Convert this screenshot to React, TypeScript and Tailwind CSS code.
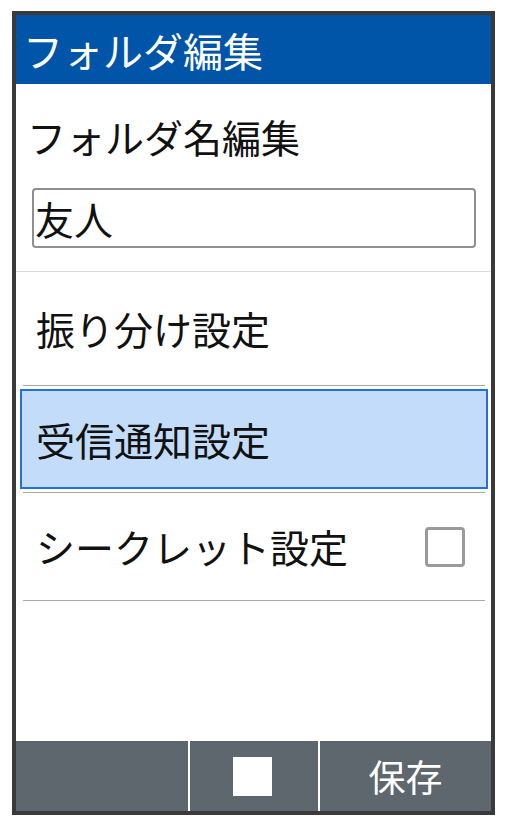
const font = { fontFamily: '"Noto Sans CJK JP", "Noto Sans", sans-serif' };

const Divider = ({ className }: { className: string }) => (
  <div className={className} />
);

export default function App() {
  return (
    <div className="w-full h-[826px] bg-white" style={font}>
      <div className="ml-[12px] mt-[11px] w-[483px] h-[804px] border-4 border-[#3a3a3a] flex flex-col">
        <header className="h-[69px] shrink-0 bg-[#0055a8] text-white text-[40px] leading-none flex items-center pl-[7px]">
          フォルダ編集
        </header>

        <div className="h-[104px] shrink-0 flex items-center pl-[11px] text-[39px] leading-none text-[#111]">
          フォルダ名編集
        </div>
        <div className="mx-[16px] mr-[15px] h-[60px] shrink-0 border-2 border-[#8f8f8f] rounded-[4px] flex items-center pl-[1px] text-[39px] leading-none text-[#111]">
          友人
        </div>
        <div className="h-[23px] shrink-0" />
        <Divider className="h-px shrink-0 bg-[#d9d9d9]" />

        <div className="h-[113px] shrink-0 flex items-center pl-[20px] text-[39px] leading-none text-[#111]">
          振り分け設定
        </div>
        <Divider className="h-px shrink-0 mx-[7px] mr-[6px] bg-[#a7a7a7]" />
        <div className="h-[3px] shrink-0" />
        <div className="h-[100px] shrink-0 ml-[4px] mr-[3px] border-2 border-[#2472d8] bg-[#c2dcfa] flex items-center pl-[14px] text-[39px] leading-none text-[#111]">
          受信通知設定
        </div>
        <div className="h-[3px] shrink-0" />
        <Divider className="h-px shrink-0 mx-[7px] mr-[6px] bg-[#a7a7a7]" />

        <div className="h-[107px] shrink-0 flex items-center justify-between pl-[20px] pr-[26px] text-[39px] leading-none text-[#111]">
          <span>シークレット設定</span>
          <span className="w-[40px] h-[40px] border-[3px] border-[#9a9a9a] rounded-[4px] bg-white" />
        </div>
        <Divider className="h-px shrink-0 mx-[7px] mr-[6px] bg-[#a7a7a7]" />

        <div className="flex-1" />

        <footer className="h-[70px] shrink-0 bg-[#5f676e] flex text-white">
          <div className="w-[172px]" />
          <div className="w-[2px] bg-white" />
          <div className="w-[128px] flex items-center justify-center">
            <div className="w-[39px] h-[39px] bg-white mr-[3px]" />
          </div>
          <div className="w-[2px] bg-white" />
          <div className="flex-1 flex items-center justify-center text-[37px] leading-none">
            保存
          </div>
        </footer>
      </div>
    </div>
  );
}
